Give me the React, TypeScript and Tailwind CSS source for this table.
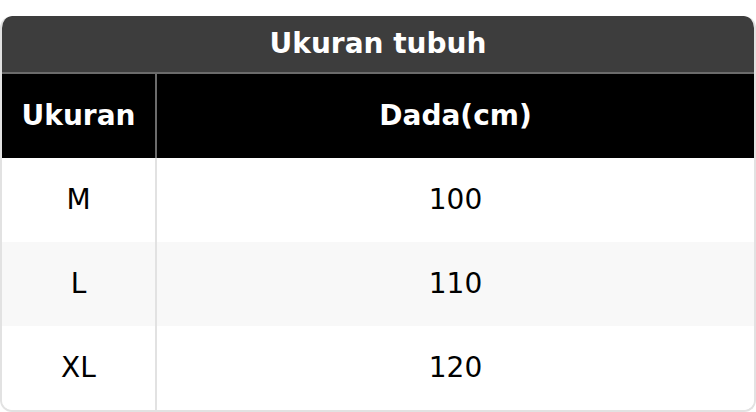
const ROWS = [
  { size: "M", chest: "100" },
  { size: "L", chest: "110" },
  { size: "XL", chest: "120" },
];

export default function App() {
  return (
    <div className="bg-white pt-4 font-['DejaVu_Sans',sans-serif]">
      <div className="overflow-hidden rounded-[12px] border-2 border-[#e2e2e2] border-t-0">
        <div className="-mx-[2px] flex h-[56px] items-center justify-center rounded-t-[12px] bg-[#3d3d3d] text-[28px] font-bold text-white">
          Ukuran tubuh
        </div>
        <div className="grid grid-cols-[155px_1fr] border-t-2 border-[#6b6b6b] bg-black text-[28px] font-bold text-white">
          <div className="flex h-[84px] items-center justify-center border-r-2 border-[#6b6b6b]">
            Ukuran
          </div>
          <div className="flex h-[84px] items-center justify-center">Dada(cm)</div>
        </div>
        {ROWS.map((r, i) => (
          <div
            key={r.size}
            className={`grid grid-cols-[155px_1fr] text-[28px] text-black ${
              i % 2 === 1 ? "bg-[#f8f8f8]" : "bg-white"
            }`}
          >
            <div className="flex h-[84px] items-center justify-center border-r-2 border-[#e2e2e2]">
              {r.size}
            </div>
            <div className="flex h-[84px] items-center justify-center">{r.chest}</div>
          </div>
        ))}
      </div>
    </div>
  );
}
